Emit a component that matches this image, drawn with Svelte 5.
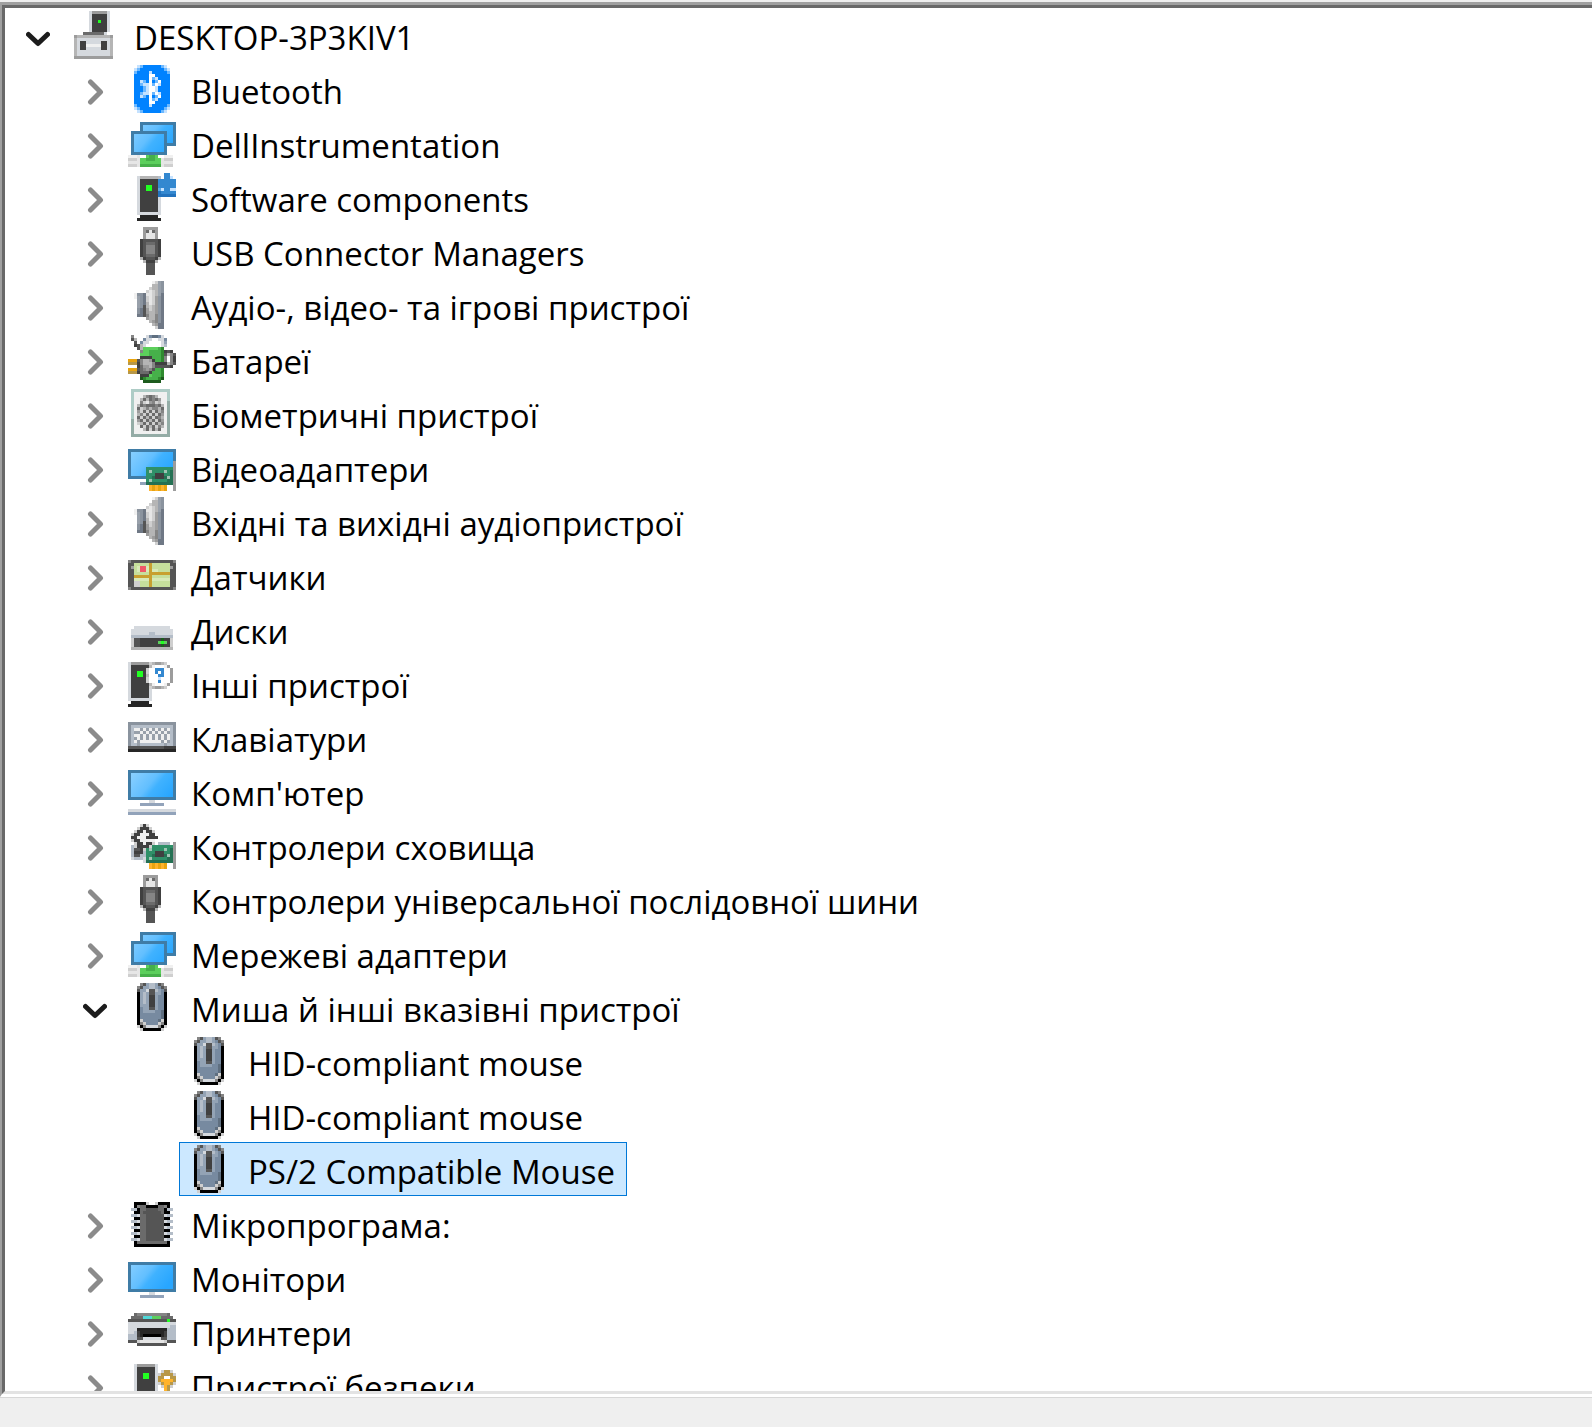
<script>
    // --Icon Colours--
    // One character is one pixel of a 16x16 icon, "." is empty
    const palette = {
        0: "#000000", 1: "#262626", 2: "#404040", 3: "#555555", 4: "#6b6b6b",
        5: "#858585", 6: "#9c9c9c", 7: "#b5b5b5", 8: "#cfcfcf", 9: "#e6e6e6",
        f: "#f0f0f0", w: "#ffffff",
        a: "#5f6f80", b: "#778aa0", c: "#93a3b5", d: "#b4bdc8", e: "#d5d9de",
        A: "#6f7885", x: "#8a939e", v: "#98a0aa",
        W: "#3f7ca6", S: "url(#screen)", n: "#92a3ba",
        B: "#0082ff", C: "#6cb8ff", D: "#c5e2ff",
        P: "#3388d0", p: "#2272bd", q: "#5aa5e0",
        G: "#22ff22", g: "#5ccf5c", h: "#46b04a", i: "#2f8a2f", k: "#1d5b1d",
        T: "#2f9068", t: "#257053", u: "#a0c4b4",
        Y: "#e8a410", y: "#ffb32c", z: "#b89848",
        R: "#ef5a68", M: "#c6df9c", m: "#d8eab8", o: "#c8a030",
        F: "#aeccc6", H: "#94aca6", l: "#50d8d8",
    };

    const empty = "................";
    const repeat = (row, times) => Array(times).fill(row);
    const screenFrame = "WWWWWWWWWWWWWWWW";
    const screenRow = "WSSSSSSSSSSSSSSW";

    const icons = {
        root: [
            "......e66666e...",
            ...repeat("......e22222e...", 2),
            "......e22G22e...",
            ...repeat("......e22222e...", 3),
            "....4444444e....",
            ".6777777777776..",
            ".7eeeeeeeeeee7..",
            ".7e22eeeee22e7..",
            ".7e22fffff22e7..",
            ".7e22eeeee22e7..",
            ...repeat(".7eeeeeeeeeee7..", 2),
            ".6666666666666..",
        ],
        bluetooth: [
            "...DCBBBBBBCD...",
            "..DCBBBBBBBBCD..",
            "..CBBBBDBBBBBC..",
            "..BBBBBwwBBBBB..",
            "..BBBBBwCDBBBB..",
            "..BBDCBwBCwBBB..",
            "..BBCDDwCwDBBB..",
            "..BBBCDwwDBBBB..",
            "..BBBCDwwDBBBB..",
            "..BBCDDwCwDBBB..",
            "..BBDCBwBCwBBB..",
            "..BBBBBwCDBBBB..",
            "..BBBBBwwBBBBB..",
            "..CBBBBDBBBBBC..",
            "..DCBBBBBBBBCD..",
            "...DCBBBBBBCD...",
        ],
        network: [
            empty,
            "....WWWWWWWWWWWW",
            ...repeat("....WSSSSSSSSSSW", 2),
            ".WWWWWWWWWWWWSSW",
            ...repeat(".WSSSSSSSSSSWSSW", 3),
            ".WSSSSSSSSSSWWWW",
            ...repeat(".WSSSSSSSSSSW...", 2),
            ".WWWWWWWWWWWW...",
            "fff9..ghhg..fff.",
            "8889gghhhgg9888.",
            "9999ggggggg9999.",
            "8889hhhhhhh9888.",
        ],
        software: [
            "............PP..",
            "...e777777d.PPD.",
            ...repeat("...e222222PPPPPP", 2),
            "...e22GG22PPPPPP",
            "...e22GG22qDPPDD",
            "...e222222pPPPPP",
            "...e222222pppppp",
            ...repeat("...e222222e.....", 5),
            "...eeeeeeee.....",
            "....111111......",
            "...11111111.....",
        ],
        usb: [
            ".....66666......",
            ".....64946......",
            ...repeat(".....69996......", 2),
            "....2333332.....",
            "....2344432.....",
            ...repeat("....2355532.....", 3),
            "....2344432.....",
            "....7233327.....",
            ".....72227......",
            ...repeat("......333.......", 4),
        ],
        speaker: [
            "........f8vx....",
            "........77vx....",
            ".......877vx....",
            "......8987vx....",
            "..fxxA9987vA....",
            "..fvxA8986xA....",
            "...vxA8986xA....",
            "...vxA7986xA....",
            "...vx37876xA....",
            "...xA36876xA....",
            "...xA36776xA....",
            "...AA35775xA....",
            "......6775xA....",
            ".......765xA....",
            "........76AA....",
            ".........8AA....",
        ],
        battery: [
            ".5....ebaabe....",
            ".37..beewweeb...",
            "..3.beewwwwec...",
            "..237ewwwwwed...",
            "...37ggggghi....",
            "....5gghhhhi232.",
            "....ggghhhhi3753",
            "....2222hhhi5.52",
            "YYY357762hhi5.52",
            "zzz2577752222753",
            "...246675333332.",
            "YYY345653hhi....",
            "zzz24442hhhi....",
            "....222ghhhi....",
            "....kihhhhik....",
            ".....kkkkkk.....",
        ],
        fingerprint: [
            ".FFFFFFFFFFFFF..",
            ".FfffffffffffF..",
            ".Ffff75457fffF..",
            ".Fff7474546ffF..",
            ".Fff5896587ffH..",
            ".Ff745444547fH..",
            ".Ff487575574fH..",
            ".Ff684848475fH..",
            ".Ff758484846fH..",
            ".Ff484748457fH..",
            ".Hf648474846fH..",
            ".Hf874848475fH..",
            ".Hff48474857fH..",
            ".Hfff748474ffH..",
            ".HfffffffffffH..",
            ".HHHHHHHHHHHHH..",
        ],
        display: [
            empty,
            empty,
            screenFrame,
            ...repeat(screenRow, 3),
            ...repeat("WSSSSSSSSSSSSSS6", 2),
            "WSSSSSTTTTTTTTT6",
            "WSSSSSTuTTTTuTt6",
            "WSSSSSTTT222TTt6",
            "WWWWWWTTt222tut6",
            "......TuTTTTTtt6",
            "....nnttttttttt6",
            ...repeat(".......yYyYyY..6", 2),
        ],
        sensor: [
            ...repeat(empty, 3),
            "5333333333333335",
            "33MMMMMoMMMMMM33",
            "36MmRRmoMMMMMM63",
            "33MmRRmommMMMM33",
            "33MMMMMooooooo33",
            "33ooooooMMMMMM33",
            "33mmmmmommmmmm33",
            ...repeat("3388MMMoMMMMMM33", 2),
            "5333333333333335",
        ],
        disk: [
            ...repeat(empty, 7),
            "..eeeeeeeeeeee..",
            ".eeeeeeeeeeeeee.",
            ".eeeeeeddeeeeee.",
            ".dddddddddddddd.",
            ".8332222222k228.",
            ".833222222gGg28.",
            ".8332222222k228.",
            ".77777777777777.",
        ],
        unknown: [
            empty,
            "e666666876678...",
            "e2222227fwwwf6..",
            "e222228wwPPPww6.",
            "e22GG28wwPwPww6.",
            "e22GG27wwwPPww6.",
            "e222228wwwDwww6.",
            "e222228wwwPwww6.",
            "e2222227fwwwf6..",
            "e222222876678...",
            ...repeat("e222222e........", 3),
            "eeeeeeee........",
            ".111111.........",
            "11111111........",
        ],
        keyboard: [
            ...repeat(empty, 3),
            "xxxxxxxxxxxxxxxx",
            "xddddddddddddddx",
            "xdffvfvfvfvfvfdx",
            "xdvvfvfvfvfvfvdx",
            "xdffvfvfvfvfvfdx",
            "xdvfvfvfvfvfvfdx",
            "xdfvfffffffvfvdx",
            "xddvddddddddvddx",
            "3333333333332222",
            "1111111111111111",
        ],
        computer: [
            empty,
            screenFrame,
            ...repeat(screenRow, 8),
            screenFrame,
            ".......ee.......",
            "....nnnnnnnn....",
            empty,
            "eeeeeeeeeeeeeeee",
            "nnnnnnnnnnnnnnnn",
        ],
        storage: [
            empty,
            "....828.........",
            "...82228........",
            "..822f228.......",
            ".822fff22.......",
            ".22fff2222......",
            ".822fffff.......",
            "..822f228.dddd.6",
            ".d822228TTTTTTT6",
            ".d3328TuTTTTuTt6",
            ".d222dTTT222TTt6",
            ".d33ddTTt222tut6",
            ".edddeTuTTTTTtt6",
            ".....ettttttttt6",
            ...repeat(".......yYyYyY..6", 2),
        ],
        mouse: [
            "....53cddc35....",
            "...53ccddcb35...",
            "...3cce33dcb3...",
            "...0cdc33ccb0...",
            ...repeat("...0cdc22cbb0...", 3),
            "...0ccc22cbb0...",
            "...0bcc33cbb0...",
            "...0bccccbba0...",
            ...repeat("...0bbbbbbba0...", 2),
            "...08bbbbba80...",
            "...058bbbb850...",
            "...805eeee508...",
            "....80000008....",
        ],
        chip: [
            empty,
            "..00008..80000..",
            "..054400004450..",
            ".dd0443333440dd.",
            "..004333333400..",
            ...repeat([".dde44333333edd.", "..004433333300.."], 5).flat().slice(0, 9),
            "..044444444440..",
            "..000000000000..",
        ],
        monitor: [
            ...repeat(empty, 3),
            screenFrame,
            ...repeat(screenRow, 8),
            screenFrame,
            ".......ee.......",
            "....nnnnnnnn....",
        ],
        printer: [
            empty,
            empty,
            "..455555555554..",
            ".4444lllggg4444.",
            "3333333333333G33",
            "eeeeeeeeeeeeeeee",
            "eeeeeeeeeeeeeedd",
            "eee1111111111ddd",
            "eed2111111112ddd",
            "ddd2100000012ddd",
            "ddd33eeeeee33ddd",
            "3338999999998333",
            "...3333333333...",
        ],
        security: [
            empty,
            "..e666666e......",
            "..e222222e......",
            "..e222222e.8zz8.",
            "..e22GG22e8zzzz8",
            "..e22GG22ezzwwzz",
            "..e222222ezyyyyz",
            "..e222222e8zyyz8",
            "..e222222e.8yz8.",
            "..e222222e..yz..",
            ...repeat("..e222222e..yz..", 3),
            "..eeeeeeee......",
            "...111111.......",
            "..11111111......",
        ],
    };

    // Join neighbouring pixels of one colour into a single bar
    function toBars(rows) {
        const bars = [];
        rows.forEach((row, y) => {
            let x = 0;
            while (x < row.length) {
                let end = x + 1;
                while (end < row.length && row[end] === row[x]) end++;
                if (row[x] !== ".") {
                    bars.push({ x, y, width: end - x, fill: palette[row[x]] });
                }
                x = end;
            }
        });
        return bars;
    }

    const iconBars = Object.fromEntries(
        Object.entries(icons).map(([name, rows]) => [name, toBars(rows)])
    );

    // --Device Tree--
    let tree = $state({
        name: "DESKTOP-3P3KIV1",
        icon: "root",
        open: true,
        children: [
            { name: "Bluetooth", icon: "bluetooth" },
            { name: "DellInstrumentation", icon: "network" },
            { name: "Software components", icon: "software" },
            { name: "USB Connector Managers", icon: "usb" },
            { name: "Аудіо-, відео- та ігрові пристрої", icon: "speaker" },
            { name: "Батареї", icon: "battery" },
            { name: "Біометричні пристрої", icon: "fingerprint" },
            { name: "Відеоадаптери", icon: "display" },
            { name: "Вхідні та вихідні аудіопристрої", icon: "speaker" },
            { name: "Датчики", icon: "sensor" },
            { name: "Диски", icon: "disk" },
            { name: "Інші пристрої", icon: "unknown" },
            { name: "Клавіатури", icon: "keyboard" },
            { name: "Комп'ютер", icon: "computer" },
            { name: "Контролери сховища", icon: "storage" },
            { name: "Контролери універсальної послідовної шини", icon: "usb" },
            { name: "Мережеві адаптери", icon: "network" },
            {
                name: "Миша й інші вказівні пристрої",
                icon: "mouse",
                open: true,
                children: [
                    { name: "HID-compliant mouse", icon: "mouse", leaf: true },
                    { name: "HID-compliant mouse", icon: "mouse", leaf: true },
                    { name: "PS/2 Compatible Mouse", icon: "mouse", leaf: true },
                ],
            },
            { name: "Мікропрограма:", icon: "chip" },
            { name: "Монітори", icon: "monitor" },
            { name: "Принтери", icon: "printer" },
            { name: "Пристрої безпеки", icon: "security" },
        ],
    });

    let selected = $state("0-17-2");
</script>

{#snippet node(item, id)}
    <li>
        <div class="row">
            {#if item.leaf}
                <span class="toggle"></span>
            {:else}
                <button
                    class="toggle"
                    class:open={item.open}
                    aria-label={item.name}
                    aria-expanded={!!item.open}
                    onclick={() => (item.open = !item.open)}
                >
                    <svg viewBox="0 0 24 32" aria-hidden="true">
                        <path d={item.open ? "M2.5 15.5 12 24.5 21.5 15.5" : "M7.5 9 17.5 19 7.5 29"} />
                    </svg>
                </button>
            {/if}
            <button
                class="device"
                class:selected={selected === id}
                onclick={() => (selected = id)}
            >
                <svg class="icon" viewBox="0 0 16 16" aria-hidden="true">
                    {#each iconBars[item.icon] as bar}
                        <rect x={bar.x} y={bar.y} width={bar.width} height="1" fill={bar.fill} />
                    {/each}
                </svg>
                <span class="name">{item.name}</span>
            </button>
        </div>
        {#if item.open && item.children}
            <ul>
                {#each item.children as child, index}
                    {@render node(child, `${id}-${index}`)}
                {/each}
            </ul>
        {/if}
    </li>
{/snippet}

<div class="window">
    <svg class="defs" width="0" height="0" aria-hidden="true">
        <linearGradient id="screen" gradientUnits="userSpaceOnUse" x1="2" y1="2" x2="13" y2="11">
            <stop offset="0" stop-color="#86ceff" />
            <stop offset="0.45" stop-color="#62bfff" />
            <stop offset="0.6" stop-color="#40b2ff" />
            <stop offset="1" stop-color="#28a6ff" />
        </linearGradient>
    </svg>
    <main class="panel">
        <ul class="tree">
            {@render node(tree, "0")}
        </ul>
    </main>
    <footer class="statusBar"></footer>
</div>

<style>
    :global(body) {
        background: #efefef;
    }

    .window {
        height: 100vh;
        display: flex;
        flex-direction: column;
        box-sizing: border-box;
        padding-top: 2px;
        font-family: "Open Sans", "Noto Sans", sans-serif;
        font-size: 33px;
        color: #000;
    }

    .defs {
        position: absolute;
    }

    .panel {
        flex: 1;
        min-height: 0;
        display: flex;
        background: #fff;
        border-top: 3px solid #a0a0a0;
        border-left: 2px solid #a0a0a0;
        border-bottom: 3px solid #fff;
    }

    .tree {
        flex: 1;
        overflow: auto;
        scrollbar-width: none;
        border-top: 3px solid #696969;
        border-left: 3px solid #696969;
        border-bottom: 3px solid #e3e3e3;
    }

    ul {
        list-style: none;
        margin: 0;
        padding: 0;
    }

    ul ul {
        padding-left: 57px;
    }

    .row {
        display: flex;
        height: 54px;
        padding-left: 21px;
    }

    button {
        border: none;
        background: none;
        font: inherit;
        color: inherit;
        padding: 0;
    }

    .toggle {
        flex: none;
        width: 24px;
        margin-right: 15px;
        display: flex;
        align-items: center;
    }

    .toggle svg {
        width: 24px;
        height: 32px;
        fill: none;
        stroke: #8b8b8b;
        stroke-width: 5;
        stroke-linecap: round;
        stroke-linejoin: round;
    }

    .toggle.open svg {
        stroke: #1c1c1c;
    }

    .toggle:hover svg {
        stroke: #4cc2f0;
    }

    .device {
        display: flex;
        align-items: center;
        gap: 15px;
        box-sizing: border-box;
        padding: 0 11px 0 5px;
        border: 1px solid transparent;
        white-space: nowrap;
    }

    .device:hover {
        background: #e5f3ff;
    }

    .device.selected {
        background: #cce8ff;
        border-color: #0078d7;
    }

    .icon {
        flex: none;
        width: 48px;
        height: 48px;
        shape-rendering: crispEdges;
    }

    .name {
        padding-top: 4px;
    }

    .statusBar {
        flex: none;
        height: 29px;
        background: #efefef;
        border-top: 1px solid #d7d7d7;
    }
</style>
